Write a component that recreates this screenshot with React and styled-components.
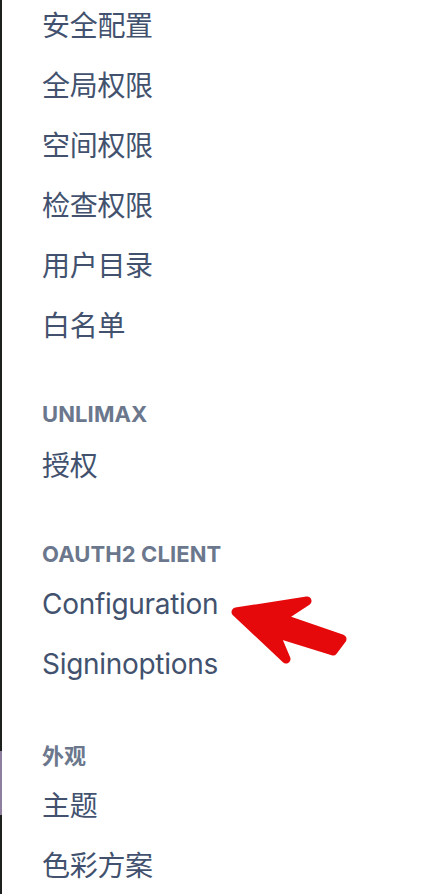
import React from 'react';
import styled, {createGlobalStyle} from 'styled-components';

const GlobalStyle = createGlobalStyle`
  html, body {
    margin: 0;
    padding: 0;
    background: #ffffff;
    overflow: hidden;
  }
`

const Page = styled.div`
  position: relative;
  display: flex;
  width: 442px;
  height: 894px;
  overflow: hidden;
  font-family: Inter, "Noto Sans CJK SC", sans-serif;
`

const EdgeStrip = styled.div`
  flex: 0 0 2px;
  background: linear-gradient(
    to bottom,
    #1d211e 0,
    #1d211e 751px,
    #8e7f9e 751px,
    #8e7f9e 815px,
    #1d211e 815px
  );
`

const Sidebar = styled.nav`
  flex: 1;
  display: flex;
  flex-direction: column;
  padding-left: 40px;
  margin-top: -6px;
`

const Group = styled.div`
  display: flex;
  flex-direction: column;
  margin-top: ${props => props.first ? '0' : '38px'};
`

const GroupTitle = styled.div`
  height: 42px;
  display: flex;
  align-items: center;
  padding-top: 2px;
  box-sizing: border-box;
  font-size: 22px;
  font-weight: 700;
  letter-spacing: 0.1px;
  color: #6b778c;
  text-transform: uppercase;
`

const Item = styled.div`
  height: 60px;
  display: flex;
  align-items: center;
  font-size: 28px;
  letter-spacing: -0.3px;
  color: #42526e;
  cursor: pointer;
`

const Annotation = styled.svg`
  position: absolute;
  left: 0;
  top: 0;
  pointer-events: none;
`

const groups = [
    {items: ['安全配置', '全局权限', '空间权限', '检查权限', '用户目录', '白名单']},
    {title: 'Unlimax', items: ['授权']},
    {title: 'OAuth2 Client', items: ['Configuration', 'Signinoptions']},
    {title: '外观', items: ['主题', '色彩方案']},
]

const RedArrow = () => (
    <Annotation width="442" height="894" viewBox="0 0 442 894">
        <polygon
            points="236,612 307,601 281,618 342,639 333,651 275,633 286,659"
            fill="#e6090b"
            stroke="#e6090b"
            strokeWidth="9"
            strokeLinejoin="round"
        />
    </Annotation>
)

export default function App() {
    return (
        <Page>
            <GlobalStyle/>
            <EdgeStrip/>
            <Sidebar>
                {groups.map((g, i) => (
                    <Group key={i} first={i === 0}>
                        {g.title && <GroupTitle>{g.title}</GroupTitle>}
                        {g.items.map(item => <Item key={item}>{item}</Item>)}
                    </Group>
                ))}
            </Sidebar>
            <RedArrow/>
        </Page>
    );
}
